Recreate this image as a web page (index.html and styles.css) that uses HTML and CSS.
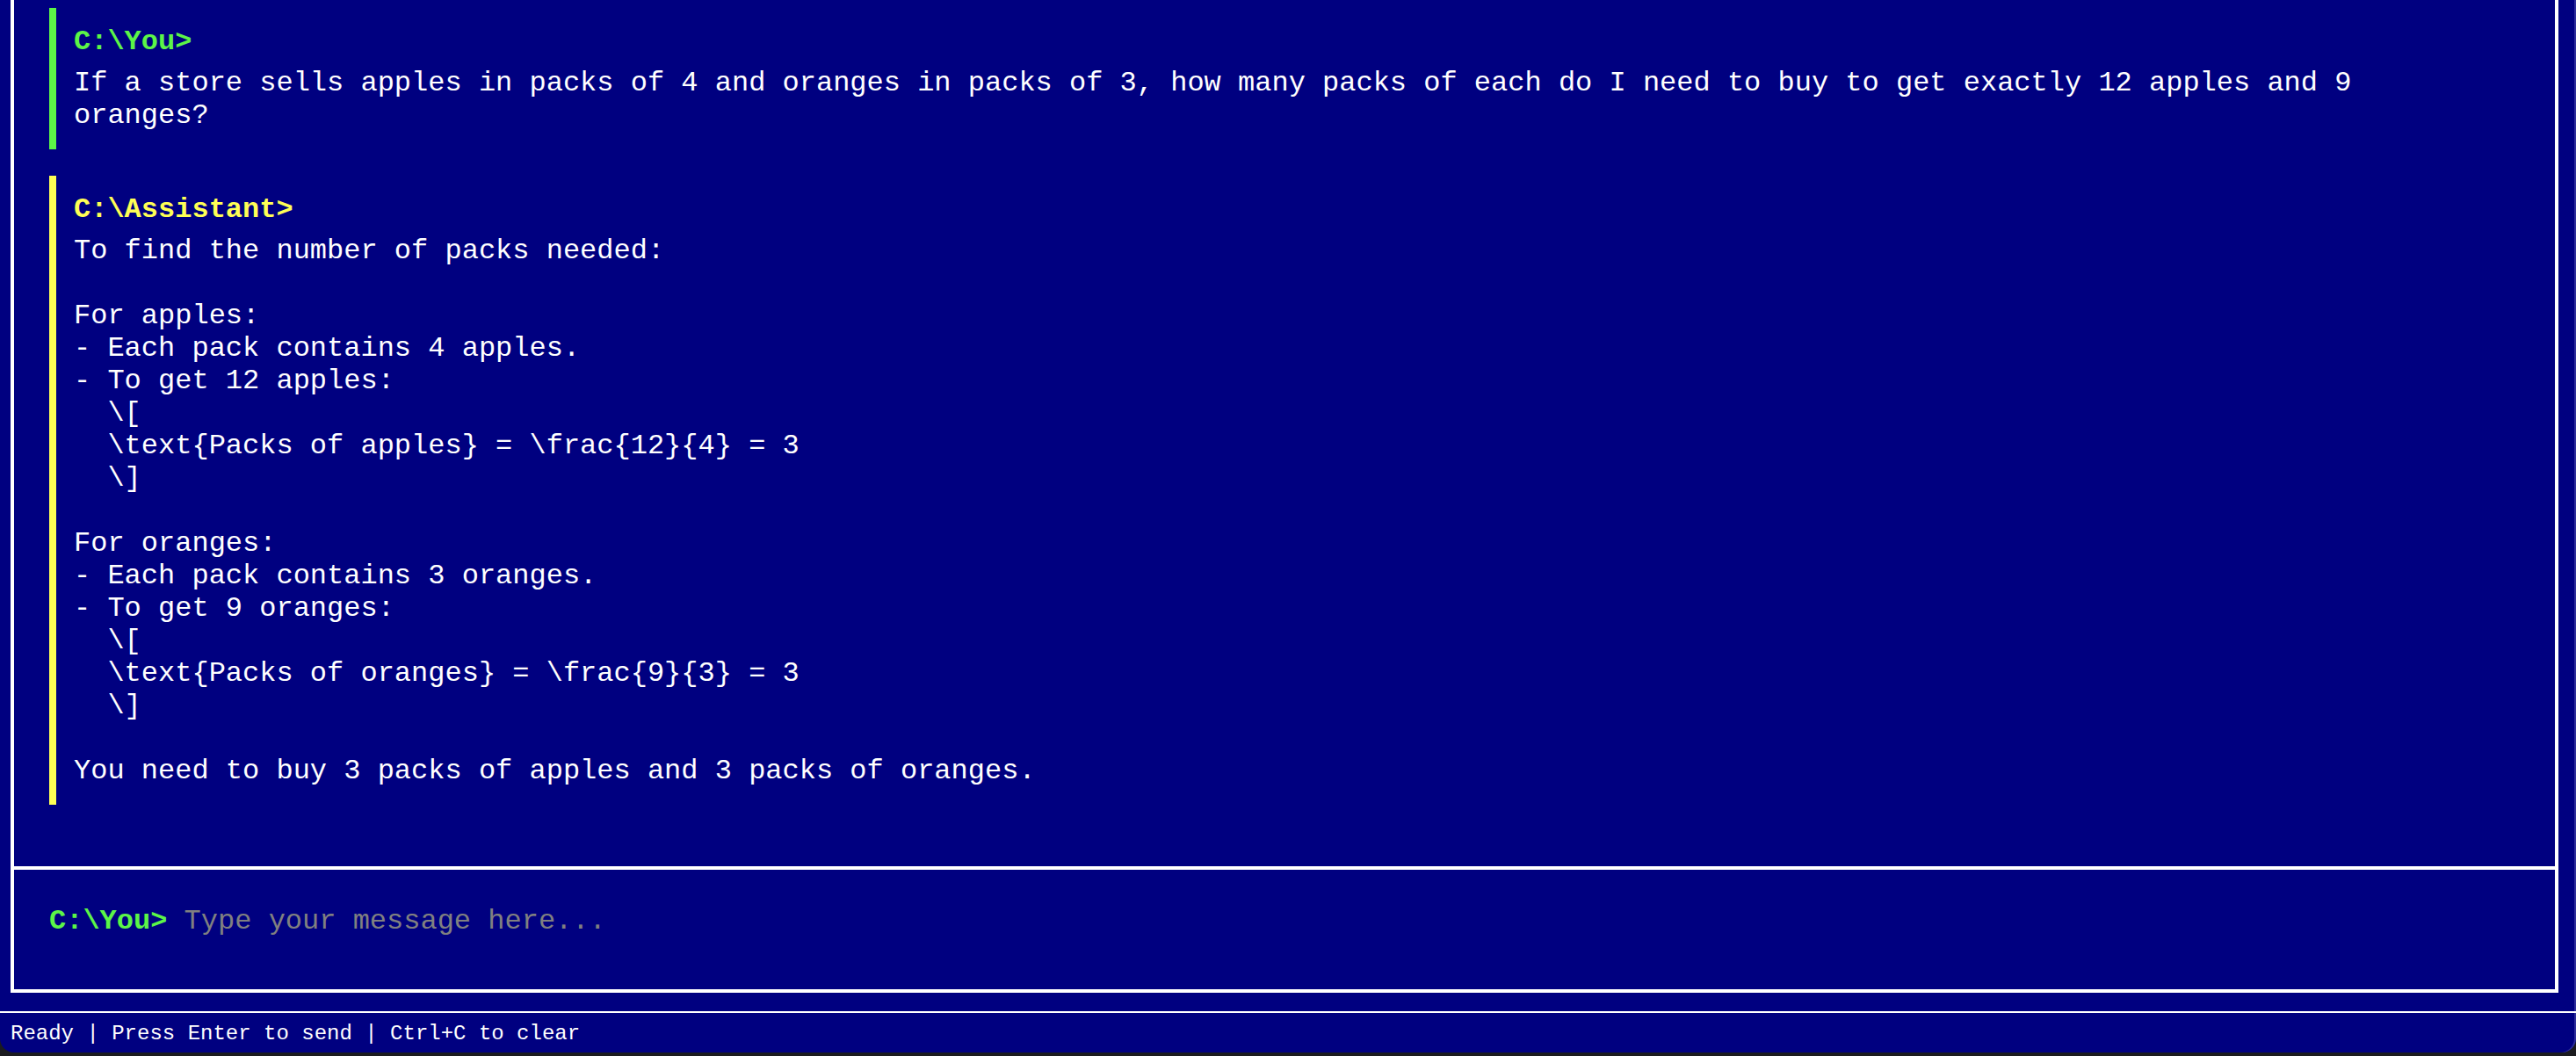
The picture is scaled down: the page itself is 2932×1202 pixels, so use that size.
FILE: index.html
```html
<!DOCTYPE html>
<html lang="en">
<head>
<meta charset="utf-8">
<title>C:\Chat</title>
<link rel="stylesheet" href="styles.css">
</head>
<body>
<div class="app">
  <main class="main">
    <section class="frame">
      <div class="messages">
        <div class="message user">
          <div class="message-header">C:\You&gt;</div>
          <div class="message-body">If a store sells apples in packs of 4 and oranges in packs of 3, how many packs of each do I need to buy to get exactly 12 apples and 9 oranges?</div>
        </div>
        <div class="message assistant">
          <div class="message-header">C:\Assistant&gt;</div>
          <div class="message-body">To find the number of packs needed:

For apples:
- Each pack contains 4 apples.
- To get 12 apples:
  \[
  \text{Packs of apples} = \frac{12}{4} = 3
  \]

For oranges:
- Each pack contains 3 oranges.
- To get 9 oranges:
  \[
  \text{Packs of oranges} = \frac{9}{3} = 3
  \]

You need to buy 3 packs of apples and 3 packs of oranges.</div>
        </div>
      </div>
      <div class="input-area">
        <span class="prompt">C:\You&gt;</span>
        <input class="input" type="text" placeholder="Type your message here...">
      </div>
    </section>
  </main>
  <footer class="status-bar">Ready | Press Enter to send | Ctrl+C to clear</footer>
</div>
</body>
</html>
```
FILE: styles.css
```css
html, body {
  margin: 0;
  padding: 0;
  height: 100%;
}

body {
  background: #1b1b1f;
  font-family: "Courier New", "Nimbus Mono PS", "Nimbus Mono L", FreeMono, Courier, "Liberation Mono", monospace;
  color: #ffffff;
  overflow: hidden;
}

.app {
  height: 1198px;
  background: #000080;
  display: flex;
  flex-direction: column;
  border-radius: 0 0 16px 16px;
  overflow: hidden;
  box-shadow: inset -2px 0 0 #2e2e9a;
}

.main {
  flex: 1;
  min-height: 0;
  display: flex;
  flex-direction: column;
  padding: 0 20px 21px 12px;
}

.frame {
  flex: 1;
  min-height: 0;
  display: flex;
  flex-direction: column;
  border: 4px solid #ffffff;
  border-top: none;
}

.messages {
  flex: 1;
  min-height: 0;
  overflow: hidden;
  display: flex;
  flex-direction: column;
  justify-content: flex-end;
  padding: 40px;
  border-bottom: 4px solid #ffffff;
}

.message {
  flex: none;
  margin-bottom: 30px;
  padding: 20px 40px 20px 20px;
  border-left: 8px solid #ffffff;
  font-size: 32px;
  line-height: 37px;
}

.message.user {
  border-left-color: #5cf547;
}

.message.assistant {
  border-left-color: #ffff55;
}

.message-header {
  font-weight: bold;
  margin-bottom: 10px;
}

.message.user .message-header {
  color: #5cf547;
}

.message.assistant .message-header {
  color: #ffff55;
}

.message-body {
  white-space: pre-wrap;
  color: #ffffff;
}

.input-area {
  height: 136px;
  box-sizing: border-box;
  flex: none;
  display: flex;
  align-items: flex-start;
  padding: 40px 40px 0;
  font-size: 32px;
  line-height: 37px;
}

.prompt {
  color: #5cf547;
  font-weight: bold;
  margin-right: 19.2px;
  white-space: pre;
}

.input {
  flex: 1;
  height: 37px;
  background: transparent;
  border: none;
  outline: none;
  padding: 0;
  margin: 0;
  color: #ffffff;
  font-family: inherit;
  font-size: 32px;
  line-height: 37px;
}

.input::placeholder {
  color: #808080;
  opacity: 1;
}

.status-bar {
  flex: none;
  box-sizing: border-box;
  height: 47px;
  border-top: 2px solid #ffffff;
  padding: 3px 12px 0;
  display: flex;
  align-items: center;
  font-size: 24px;
  line-height: 28px;
}
```
